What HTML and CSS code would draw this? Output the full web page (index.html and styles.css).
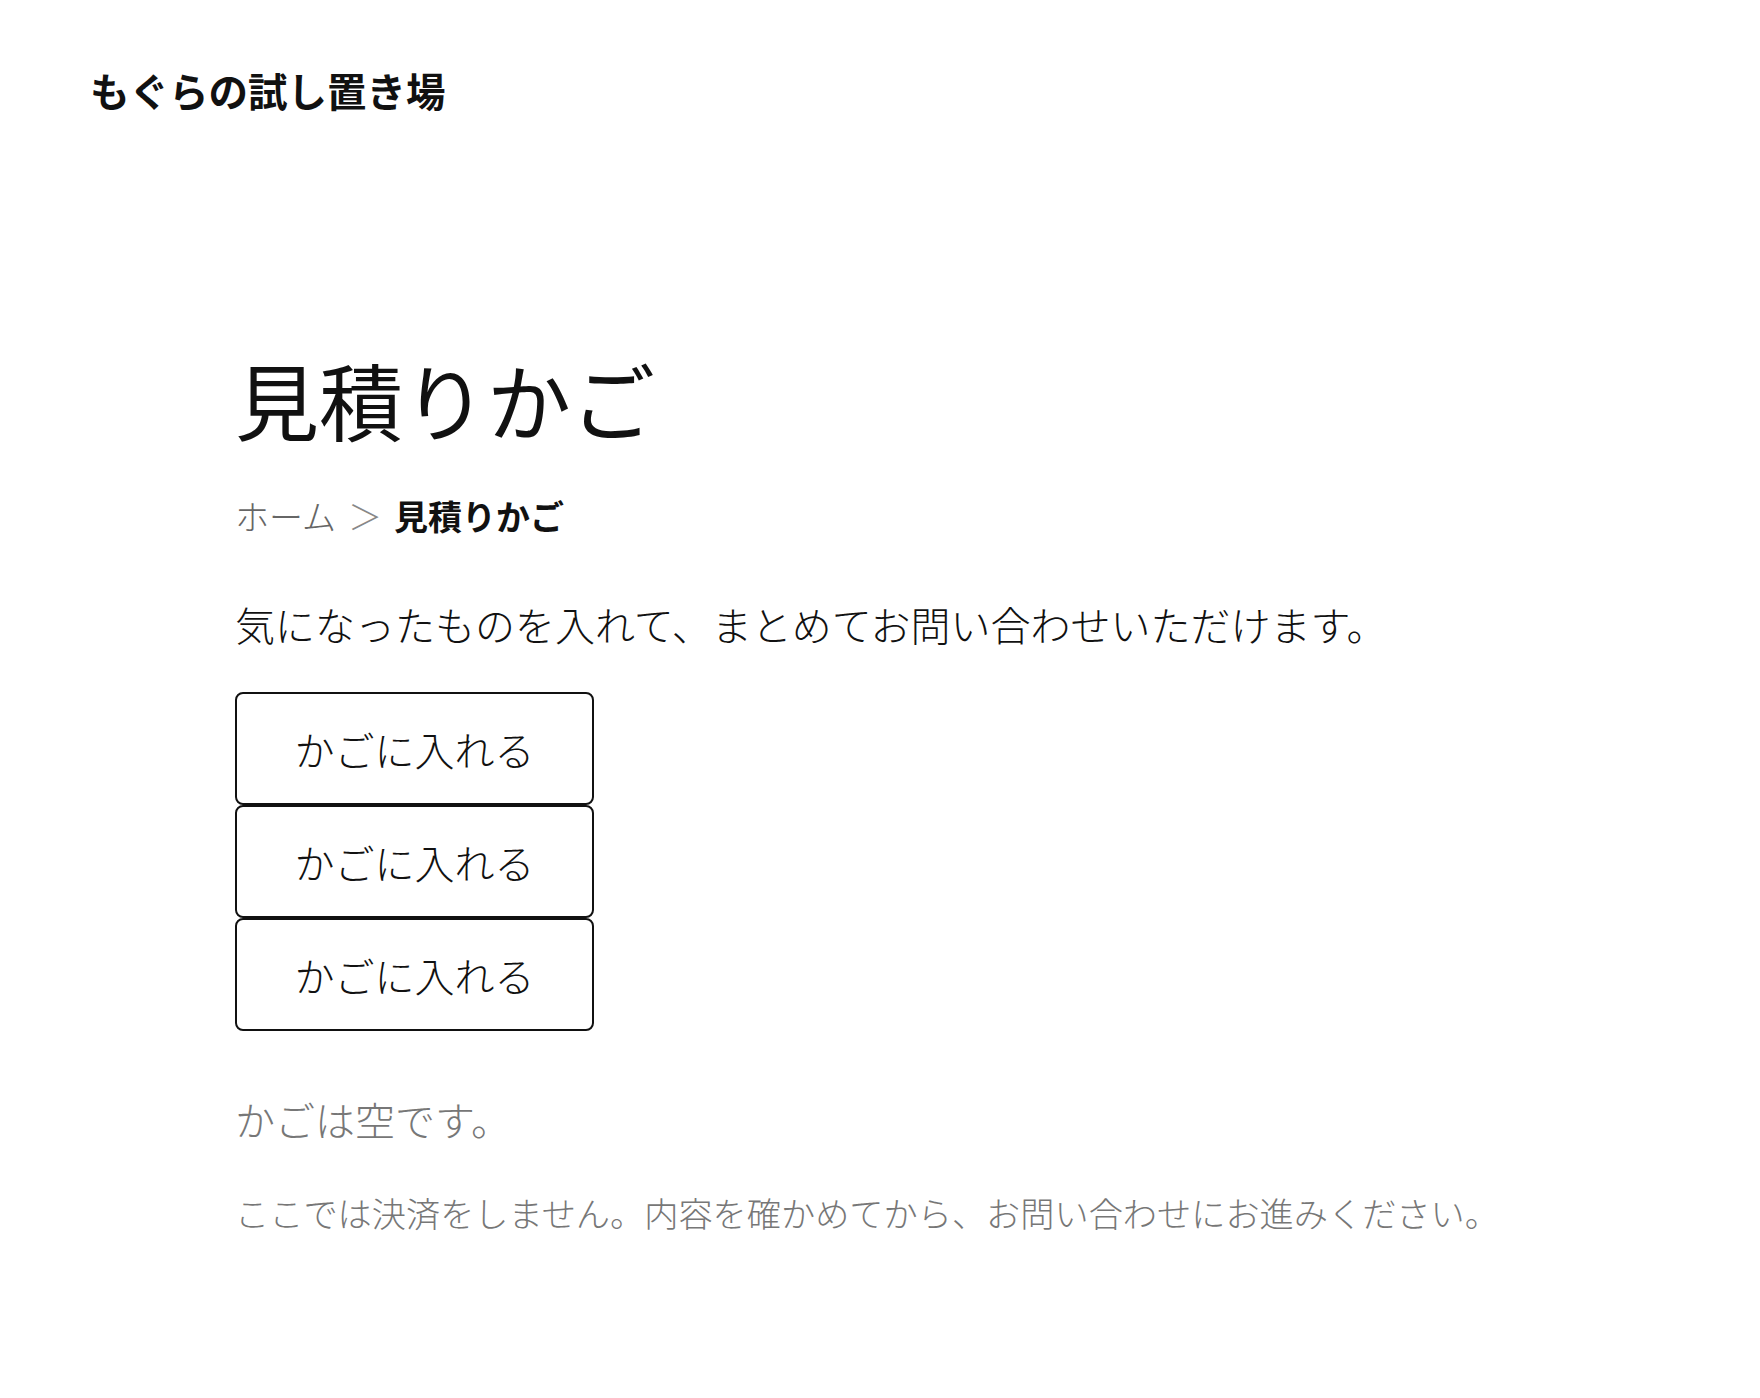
FILE: index.html
```html
<!DOCTYPE html>
<html lang="ja">
<head>
<meta charset="utf-8">
<title>見積りかご | もぐらの試し置き場</title>
<link rel="stylesheet" href="styles.css">
</head>
<body>
<header class="site-header">
  <a class="site-title" href="#">もぐらの試し置き場</a>
</header>
<main class="page">
  <h1 class="page-title">見積りかご</h1>
  <nav class="breadcrumb">
    <a class="crumb" href="#">ホーム</a>
    <span class="sep">＞</span>
    <span class="crumb current">見積りかご</span>
  </nav>
  <p class="lead">気になったものを入れて、まとめてお問い合わせいただけます。</p>
  <div class="buttons">
    <button class="add-btn" type="button">かごに入れる</button>
    <button class="add-btn" type="button">かごに入れる</button>
    <button class="add-btn" type="button">かごに入れる</button>
  </div>
  <p class="empty">かごは空です。</p>
  <p class="note">ここでは決済をしません。内容を確かめてから、お問い合わせにお進みください。</p>
</main>
</body>
</html>
```
FILE: styles.css
```css
html, body {
  margin: 0;
  padding: 0;
  background: #ffffff;
}
body {
  font-family: "Noto Sans CJK JP", "Noto Sans", sans-serif;
  color: #111111;
  font-weight: 300;
}
.site-header {
  padding: 60px 90px 0;
}
.site-title {
  display: block;
  font-size: 39.5px;
  line-height: 60px;
  font-weight: 700;
  color: #111111;
  text-decoration: none;
}
.page {
  padding: 0 40px 0 235px;
}
.page-title {
  margin: 229px 0 0;
  font-size: 84px;
  line-height: 100px;
  font-weight: 400;
  color: #111111;
}
.breadcrumb {
  margin-top: 41px;
  font-size: 34px;
  line-height: 51px;
  display: flex;
  gap: 12px;
}
.crumb {
  color: #666666;
  text-decoration: none;
}
.sep {
  color: #888888;
}
.crumb.current {
  color: #111111;
  font-weight: 700;
}
.lead {
  margin: 53px 0 0;
  font-size: 40px;
  line-height: 60px;
}
.buttons {
  margin-top: 38px;
  display: flex;
  flex-direction: column;
  align-items: flex-start;
}
.add-btn {
  display: block;
  width: 359px;
  padding: 24.5px 0;
  border: 2px solid #111111;
  border-radius: 8px;
  background: #ffffff;
  font-family: inherit;
  font-weight: 300;
  font-size: 40px;
  line-height: 60px;
  color: #111111;
  text-align: center;
  cursor: pointer;
}
.empty {
  margin: 58px 0 0;
  font-size: 40px;
  line-height: 60px;
  color: #777777;
}
.note {
  margin: 37px 0 0;
  font-size: 34.2px;
  line-height: 52px;
  color: #777777;
}
```
